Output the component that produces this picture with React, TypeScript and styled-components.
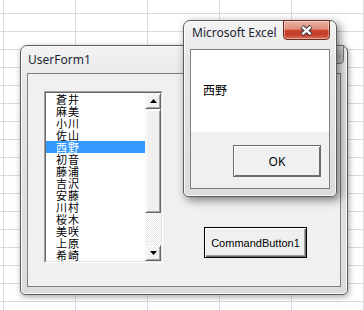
import styled, { createGlobalStyle, css } from "styled-components";

const names = [
  "蒼井",
  "麻美",
  "小川",
  "佐山",
  "西野",
  "初音",
  "藤浦",
  "吉沢",
  "安藤",
  "川村",
  "桜木",
  "美咲",
  "上原",
  "希崎",
];
const selected = "西野";

const GlobalStyle = createGlobalStyle`
  html, body {
    margin: 0;
    padding: 0;
    background: #fff;
  }
  body {
    font-family: "Noto Sans", "Liberation Sans", sans-serif;
  }
`;

const Sheet = styled.div`
  position: relative;
  width: 364px;
  height: 310px;
  overflow: hidden;
  background-color: #fff;
  background-image: linear-gradient(to right, #dadcdd 1px, transparent 1px),
    linear-gradient(to bottom, #dadcdd 1px, transparent 1px);
  background-size: 72px 18px;
  background-position: 3px 13px;
`;

const Window = styled.div<{
  $left: number;
  $top: number;
  $width: number;
  $height: number;
  $active?: boolean;
}>`
  position: absolute;
  left: ${(p) => p.$left}px;
  top: ${(p) => p.$top}px;
  width: ${(p) => p.$width}px;
  height: ${(p) => p.$height}px;
  box-sizing: border-box;
  display: flex;
  flex-direction: column;
  padding: 0 6px 7px;
  border: 1px solid #5c5c5c;
  border-radius: 7px 7px 5px 5px;
  background: linear-gradient(to bottom, #f3f3f3, #e6e6e6 40px, #dcdcdc);
  box-shadow: inset 0 0 0 1px rgba(255, 255, 255, 0.8),
    ${(p) =>
      p.$active
        ? "3px 3px 10px rgba(0, 0, 0, 0.5)"
        : "1px 2px 6px rgba(0, 0, 0, 0.35)"};
`;

const TitleBar = styled.div<{ $height: number }>`
  flex: none;
  display: flex;
  align-items: flex-start;
  height: ${(p) => p.$height}px;
`;

const TitleText = styled.span<{ $offset: number; $indent: number }>`
  padding-top: ${(p) => p.$offset}px;
  padding-left: ${(p) => p.$indent}px;
  font-size: 12px;
  line-height: 16px;
  color: #1b2533;
  white-space: nowrap;
`;

const CloseButton = styled.div<{ $active?: boolean }>`
  margin-left: auto;
  margin-top: -1px;
  box-sizing: border-box;
  display: flex;
  align-items: center;
  justify-content: center;
  border-radius: 0 0 4px 4px;
  ${(p) =>
    p.$active
      ? css`
          width: 47px;
          height: 20px;
          border: 1px solid #6e2a1e;
          background: linear-gradient(
            to bottom,
            #eab0a2 0%,
            #df8f7c 45%,
            #c9452d 52%,
            #c43f28 75%,
            #d6705a 100%
          );
          box-shadow: inset 0 0 0 1px rgba(255, 255, 255, 0.4);
        `
      : css`
          width: 43px;
          height: 19px;
          margin-right: -3px;
          border: 1px solid #7a7a7a;
          background: linear-gradient(to bottom, #e4e4e4, #c9c9c9 50%, #bdbdbd 51%, #d0d0d0);
        `}
`;

const Client = styled.div`
  flex: 1;
  box-sizing: border-box;
  display: flex;
  flex-direction: column;
  border: 1px solid #808080;
  background: #f0f0f0;
  min-height: 0;
`;

const FormBody = styled.div`
  flex: 1;
  display: flex;
  align-items: flex-start;
  gap: 41px;
  padding: 17px 0 0 16px;
`;

const raised = css`
  box-sizing: border-box;
  background: #f0f0f0;
  border: 1px solid;
  border-color: #f0f0f0 #696969 #696969 #f0f0f0;
  box-shadow: inset 1px 1px #fff, inset -1px -1px #a0a0a0;
`;

const ListBox = styled.div`
  box-sizing: border-box;
  display: flex;
  width: 119px;
  height: 172px;
  border: 1px solid;
  border-color: #a0a0a0 #fff #fff #a0a0a0;
  background: #fff;
`;

const ListInner = styled.div`
  flex: 1;
  display: flex;
  min-width: 0;
  border: 1px solid;
  border-color: #696969 #e3e3e3 #e3e3e3 #696969;
`;

const Items = styled.div`
  flex: 1;
  display: flex;
  flex-direction: column;
  overflow: hidden;
`;

const Item = styled.div<{ $selected: boolean }>`
  height: 12px;
  line-height: 12px;
  padding-left: 10px;
  font-family: "Noto Sans CJK JP", sans-serif;
  font-size: 11px;
  letter-spacing: 1px;
  white-space: nowrap;
  color: ${(p) => (p.$selected ? "#fff" : "#000")};
  background: ${(p) => (p.$selected ? "#3399ff" : "transparent")};
`;

const ScrollBar = styled.div`
  flex: none;
  width: 16px;
  display: flex;
  flex-direction: column;
`;

const ScrollButton = styled.div`
  ${raised};
  flex: none;
  height: 16px;
  display: flex;
  align-items: center;
  justify-content: center;
`;

const Thumb = styled.div`
  ${raised};
  flex: none;
  height: 104px;
`;

const Track = styled.div`
  flex: 1;
  background: repeating-conic-gradient(#fff 0 25%, #e6e6e6 0 50%) 0 0 / 2px 2px;
`;

const CommandButton = styled.div`
  box-sizing: border-box;
  margin-top: 136px;
  width: 103px;
  height: 31px;
  display: flex;
  align-items: center;
  justify-content: center;
  border: 1px solid #000;
  background: #f0f0f0;
  box-shadow: inset 1px 1px #fff, inset -1px -1px #696969, inset -2px -2px #a0a0a0;
  font-family: "Liberation Sans", Arial, sans-serif;
  font-size: 11px;
  color: #000;
  white-space: nowrap;
`;

const Message = styled.div`
  flex: none;
  height: 82px;
  box-sizing: border-box;
  padding: 32px 0 0 12px;
  background: #fff;
  font-family: "Noto Sans CJK JP", sans-serif;
  font-size: 12px;
  line-height: 16px;
  color: #000;
`;

const ButtonRow = styled.div`
  flex: 1;
  display: flex;
  justify-content: flex-end;
  align-items: flex-start;
  padding: 13px 8px 0 0;
`;

const OkButton = styled.div`
  box-sizing: border-box;
  width: 88px;
  height: 32px;
  display: flex;
  align-items: center;
  justify-content: center;
  border: 1px solid #6d6d6d;
  background: #f0f0f0;
  box-shadow: inset 1px 1px #fff, inset -1px -1px #6d6d6d;
  font-size: 12px;
  color: #000;
`;

const Arrow = ({ down }: { down?: boolean }) => (
  <svg width="7" height="4" viewBox="0 0 7 4">
    <path d={down ? "M0 0H7L3.5 4Z" : "M0 4H7L3.5 0Z"} fill="#000" />
  </svg>
);

const CloseGlyph = () => (
  <svg width="13" height="11" viewBox="0 0 13 11">
    <path d="M2 1.5L11 9.5M11 1.5L2 9.5" stroke="#3a3a3a" strokeWidth="4.4" />
    <path d="M2.4 1.9L10.6 9.1M10.6 1.9L2.4 9.1" stroke="#fff" strokeWidth="2.4" />
  </svg>
);

export default function App() {
  return (
    <>
      <GlobalStyle />
      <Sheet>
        <Window $left={20} $top={45} $width={328} $height={250}>
          <TitleBar $height={27}>
            <TitleText $offset={6} $indent={1}>
              UserForm1
            </TitleText>
            <CloseButton />
          </TitleBar>
          <Client>
            <FormBody>
              <ListBox>
                <ListInner>
                  <Items>
                    {names.map((n) => (
                      <Item key={n} $selected={n === selected}>
                        {n}
                      </Item>
                    ))}
                  </Items>
                  <ScrollBar>
                    <ScrollButton>
                      <Arrow />
                    </ScrollButton>
                    <Thumb />
                    <Track />
                    <ScrollButton>
                      <Arrow down />
                    </ScrollButton>
                  </ScrollBar>
                </ListInner>
              </ListBox>
              <CommandButton>CommandButton1</CommandButton>
            </FormBody>
          </Client>
        </Window>

        <Window $left={183} $top={20} $width={154} $height={177} $active>
          <TitleBar $height={28}>
            <TitleText $offset={4} $indent={2}>
              Microsoft Excel
            </TitleText>
            <CloseButton $active>
              <CloseGlyph />
            </CloseButton>
          </TitleBar>
          <Client>
            <Message>{selected}</Message>
            <ButtonRow>
              <OkButton>OK</OkButton>
            </ButtonRow>
          </Client>
        </Window>
      </Sheet>
    </>
  );
}
